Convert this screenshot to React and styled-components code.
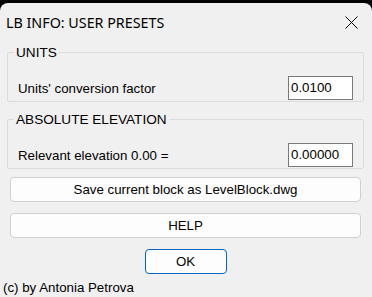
import React from "react";
import styled, { createGlobalStyle } from "styled-components";

const Global = createGlobalStyle`
  html, body { margin: 0; padding: 0; background: #000; }
  body { width: 372px; height: 297px; overflow: hidden; }
  #root { height: 297px; }
`;

const Window = styled.div`
  margin-top: 3px;
  height: 294px;
  background: #f0f0f0;
  border-radius: 8px 8px 0 0;
  display: flex;
  flex-direction: column;
  font-family: "Liberation Sans", Arial, sans-serif;
  font-size: 13.3px;
  color: #000;
  box-sizing: border-box;
`;

const TitleBar = styled.div`
  height: 37px;
  display: flex;
  align-items: center;
  justify-content: space-between;
  padding: 2px 14px 0 6px;
  box-sizing: border-box;
  font-size: 14.3px;
  font-family: "Noto Sans", "Liberation Sans", sans-serif;
`;

const CloseIcon = styled.svg`
  width: 13px;
  height: 13px;
  display: block;
`;

const Body = styled.div`
  padding: 0 8px 0 7px;
  display: flex;
  flex-direction: column;
`;

const Group = styled.fieldset`
  margin: ${(p) => p.$mt || 0}px 0 0 0;
  padding: 0 10px 1px 6px;
  border: 1px solid #dcdcdc;
  border-radius: 2px;
  min-width: 0;
`;

const Legend = styled.legend`
  font-size: 13.6px;
  padding: 0 2px;
  line-height: 15px;
`;

const Row = styled.div`
  margin-top: 17px;
  display: flex;
  align-items: center;
  justify-content: space-between;
  padding-left: 4px;
`;

const Input = styled.div`
  width: 65px;
  height: 24px;
  box-sizing: border-box;
  background: #fff;
  border: 1px solid #7a7a7a;
  padding: 3px 0 0 2px;
  margin-top: -1px;
`;

const Button = styled.div`
  margin: ${(p) => p.$mt}px 3px 0;
  height: ${(p) => p.$h}px;
  box-sizing: border-box;
  background: #fdfdfd;
  border: 1px solid #d0d0d0;
  border-radius: 4px;
  display: flex;
  align-items: center;
  justify-content: center;
`;

const OkButton = styled(Button)`
  width: 82px;
  align-self: center;
  border-color: #0067c0;
`;

const Footer = styled.div`
  padding: 6px 0 0 3px;
`;

export default function App() {
  return (
    <>
      <Global />
      <Window>
        <TitleBar>
          <span>LB INFO: USER PRESETS</span>
          <CloseIcon viewBox="0 0 13 13">
            <path d="M0.5 0.5 L12.5 12.5 M12.5 0.5 L0.5 12.5" stroke="#000" strokeWidth="1" fill="none" />
          </CloseIcon>
        </TitleBar>
        <Body>
          <Group $mt={5}>
            <Legend>UNITS</Legend>
            <Row>
              <span>Units' conversion factor</span>
              <Input>0.0100</Input>
            </Row>
          </Group>
          <Group $mt={10}>
            <Legend>ABSOLUTE ELEVATION</Legend>
            <Row>
              <span>Relevant elevation 0.00 =</span>
              <Input>0.00000</Input>
            </Row>
          </Group>
        </Body>
        <Body>
          <Button $mt={8} $h={25}>Save current block as LevelBlock.dwg</Button>
          <Button $mt={11} $h={25}>HELP</Button>
          <OkButton $mt={11} $h={25}>OK</OkButton>
        </Body>
        <Footer>(c) by Antonia Petrova</Footer>
      </Window>
    </>
  );
}
